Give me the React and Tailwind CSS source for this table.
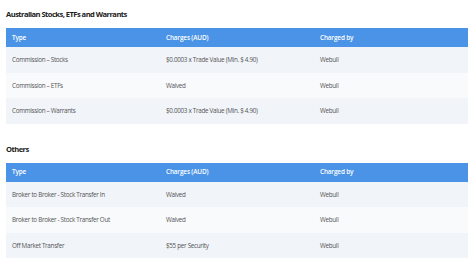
const sections = [
  {
    title: 'Australian Stocks, ETFs and Warrants',
    rows: [
      ['Commission – Stocks', '$0.0003 x Trade Value (Min. $ 4.90)', 'Webull'],
      ['Commission – ETFs', 'Waived', 'Webull'],
      ['Commission – Warrants', '$0.0003 x Trade Value (Min. $ 4.90)', 'Webull'],
    ],
  },
  {
    title: 'Others',
    rows: [
      ['Broker to Broker - Stock Transfer In', 'Waived', 'Webull'],
      ['Broker to Broker - Stock Transfer Out', 'Waived', 'Webull'],
      ['Off Market Transfer', '$55 per Security', 'Webull'],
    ],
  },
];

function FeeTable({ rows }) {
  return (
    <div className="w-[462px]">
      <div className="flex h-[19px] items-center bg-[#4a93e6] text-[6.4px] font-semibold tracking-[-0.15px] text-white">
        <div className="w-[154px] pl-[6px]">Type</div>
        <div className="w-[154px] pl-[6px]">Charges (AUD)</div>
        <div className="pl-[6px]">Charged by</div>
      </div>
      {rows.map((r, i) => (
        <div
          key={i}
          className={`flex h-[25.5px] items-center text-[6.3px] tracking-[-0.3px] text-[#555] ${i % 2 === 0 ? 'bg-[#f1f4f9]' : 'bg-[#f8fafc]'}`}
        >
          <div className="w-[154px] pl-[6px]">{r[0]}</div>
          <div className="w-[154px] pl-[6px]">{r[1]}</div>
          <div className="pl-[6px]">{r[2]}</div>
        </div>
      ))}
    </div>
  );
}

export default function App() {
  return (
    <div className="h-[264px] w-[474px] bg-white px-[6px] pt-[7px] font-['Open_Sans',sans-serif]">
      {sections.map((s, i) => (
        <section key={i} className={i === 0 ? '' : 'mt-[18px]'}>
          <h2 className="mb-[7px] text-[7.6px] font-bold leading-[14px] tracking-[-0.55px] text-[#222]">{s.title}</h2>
          <FeeTable rows={s.rows} />
        </section>
      ))}
    </div>
  );
}
